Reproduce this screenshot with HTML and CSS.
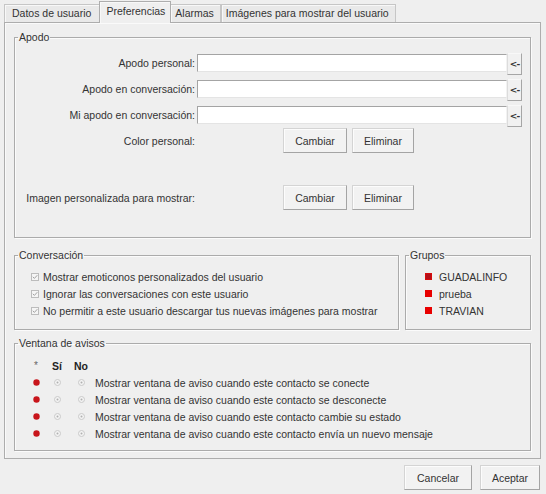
FILE: index.html
```html
<!DOCTYPE html>
<html lang="es">
<head>
<meta charset="utf-8">
<title>Preferencias</title>
<link rel="stylesheet" href="styles.css">
</head>
<body>
<div class="dialog">
  <div class="tabs">
    <div class="tab first">Datos de usuario</div>
    <div class="tab active">Preferencias</div>
    <div class="tab">Alarmas</div>
    <div class="tab">Imágenes para mostrar del usuario</div>
  </div>
  <div class="panel">
    <fieldset class="group apodo">
      <legend>Apodo</legend>
      <div class="nick-row"><span class="lbl">Apodo personal:</span><span class="input"></span><button class="arrow">&lt;-</button></div>
      <div class="nick-row"><span class="lbl">Apodo en conversación:</span><span class="input"></span><button class="arrow">&lt;-</button></div>
      <div class="nick-row"><span class="lbl">Mi apodo en conversación:</span><span class="input"></span><button class="arrow">&lt;-</button></div>
      <div class="btn-row"><span class="lbl">Color personal:</span><div class="btns"><button class="btn w64">Cambiar</button><button class="btn w62">Eliminar</button></div></div>
      <div class="btn-row second"><span class="lbl">Imagen personalizada para mostrar:</span><div class="btns"><button class="btn w64">Cambiar</button><button class="btn w62">Eliminar</button></div></div>
    </fieldset>
    <div class="mid">
      <fieldset class="group conv">
        <legend>Conversación</legend>
        <div class="check"><svg class="cb" width="8" height="8" viewBox="0 0 8 8"><rect x="0.5" y="0.5" width="7" height="7" fill="#f5f5f5" stroke="#bcbcbc"/><path d="M1.8 3.8l1.6 1.6L6.3 2.2" fill="none" stroke="#a2a2a2" stroke-width="1"/></svg><span>Mostrar emoticonos personalizados del usuario</span></div>
        <div class="check"><svg class="cb" width="8" height="8" viewBox="0 0 8 8"><rect x="0.5" y="0.5" width="7" height="7" fill="#f5f5f5" stroke="#bcbcbc"/><path d="M1.8 3.8l1.6 1.6L6.3 2.2" fill="none" stroke="#a2a2a2" stroke-width="1"/></svg><span>Ignorar las conversaciones con este usuario</span></div>
        <div class="check"><svg class="cb" width="8" height="8" viewBox="0 0 8 8"><rect x="0.5" y="0.5" width="7" height="7" fill="#f5f5f5" stroke="#bcbcbc"/><path d="M1.8 3.8l1.6 1.6L6.3 2.2" fill="none" stroke="#a2a2a2" stroke-width="1"/></svg><span>No permitir a este usuario descargar tus nuevas imágenes para mostrar</span></div>
      </fieldset>
      <fieldset class="group grupos">
        <legend>Grupos</legend>
        <div class="grp"><span class="sq checked"></span><span>GUADALINFO</span></div>
        <div class="grp"><span class="sq"></span><span>prueba</span></div>
        <div class="grp"><span class="sq"></span><span>TRAVIAN</span></div>
      </fieldset>
    </div>
    <fieldset class="group avisos">
      <legend>Ventana de avisos</legend>
      <div class="alerts">
        <span class="star">*</span><span class="hd">Sí</span><span class="hd">No</span><span></span>
        <svg class="dot" width="7" height="7" viewBox="0 0 7 7"><circle cx="3.5" cy="3.5" r="3.2" fill="#c8151b"/></svg>
        <svg class="rd" width="7" height="7" viewBox="0 0 7 7"><circle cx="3.5" cy="3.5" r="3" fill="#f4f4f4" stroke="#cacaca"/><circle cx="3.5" cy="3.5" r="1" fill="#b0b0b0"/></svg>
        <svg class="rd" width="7" height="7" viewBox="0 0 7 7"><circle cx="3.5" cy="3.5" r="3" fill="#f4f4f4" stroke="#cacaca"/><circle cx="3.5" cy="3.5" r="1" fill="#b0b0b0"/></svg>
        <span class="txt">Mostrar ventana de aviso cuando este contacto se conecte</span>
        <svg class="dot" width="7" height="7" viewBox="0 0 7 7"><circle cx="3.5" cy="3.5" r="3.2" fill="#c8151b"/></svg>
        <svg class="rd" width="7" height="7" viewBox="0 0 7 7"><circle cx="3.5" cy="3.5" r="3" fill="#f4f4f4" stroke="#cacaca"/><circle cx="3.5" cy="3.5" r="1" fill="#b0b0b0"/></svg>
        <svg class="rd" width="7" height="7" viewBox="0 0 7 7"><circle cx="3.5" cy="3.5" r="3" fill="#f4f4f4" stroke="#cacaca"/><circle cx="3.5" cy="3.5" r="1" fill="#b0b0b0"/></svg>
        <span class="txt">Mostrar ventana de aviso cuando este contacto se desconecte</span>
        <svg class="dot" width="7" height="7" viewBox="0 0 7 7"><circle cx="3.5" cy="3.5" r="3.2" fill="#c8151b"/></svg>
        <svg class="rd" width="7" height="7" viewBox="0 0 7 7"><circle cx="3.5" cy="3.5" r="3" fill="#f4f4f4" stroke="#cacaca"/><circle cx="3.5" cy="3.5" r="1" fill="#b0b0b0"/></svg>
        <svg class="rd" width="7" height="7" viewBox="0 0 7 7"><circle cx="3.5" cy="3.5" r="3" fill="#f4f4f4" stroke="#cacaca"/><circle cx="3.5" cy="3.5" r="1" fill="#b0b0b0"/></svg>
        <span class="txt">Mostrar ventana de aviso cuando este contacto cambie su estado</span>
        <svg class="dot" width="7" height="7" viewBox="0 0 7 7"><circle cx="3.5" cy="3.5" r="3.2" fill="#c8151b"/></svg>
        <svg class="rd" width="7" height="7" viewBox="0 0 7 7"><circle cx="3.5" cy="3.5" r="3" fill="#f4f4f4" stroke="#cacaca"/><circle cx="3.5" cy="3.5" r="1" fill="#b0b0b0"/></svg>
        <svg class="rd" width="7" height="7" viewBox="0 0 7 7"><circle cx="3.5" cy="3.5" r="3" fill="#f4f4f4" stroke="#cacaca"/><circle cx="3.5" cy="3.5" r="1" fill="#b0b0b0"/></svg>
        <span class="txt">Mostrar ventana de aviso cuando este contacto envía un nuevo mensaje</span>
      </div>
    </fieldset>
  </div>
  <div class="footer">
    <button class="btn cancel">Cancelar</button>
    <button class="btn accept">Aceptar</button>
  </div>
</div>
</body>
</html>
```
FILE: styles.css
```css
html, body {
  margin: 0;
  padding: 0;
}
body {
  background: #efefef;
  font-family: "Liberation Sans", Arial, sans-serif;
  font-size: 10.5px;
  color: #333;
  width: 546px;
  height: 494px;
  overflow: hidden;
}
.dialog {
  display: flex;
  flex-direction: column;
}
.tabs {
  display: flex;
  align-items: flex-end;
  height: 22px;
  padding-left: 4px;
  box-sizing: border-box;
}
.tab {
  height: 17px;
  line-height: 16px;
  padding: 0 6px 0 4px;
  border: 1px solid #c6c6c6;
  border-bottom: none;
  background: #e9e9e9;
  white-space: nowrap;
  box-shadow: inset 1px 1px 0 #f8f8f8;
}
.tab.first {
  padding: 0 8px 0 7px;
  border-right: none;
}
.tab.active {
  height: 21px;
  line-height: 19px;
  padding: 0 5px 0 6px;
  background: #efefef;
  border-color: #adadad;
  margin-bottom: -1px;
  position: relative;
  z-index: 1;
}
.tab.active + .tab {
  border-left: none;
}
.panel {
  margin: 0 5px 0 4px;
  height: 437px;
  border: 1px solid #adadad;
  box-shadow: inset 1px 1px 0 #fafafa;
  padding: 8px 9px 0 9px;
  box-sizing: border-box;
  display: flex;
  flex-direction: column;
}
.group {
  margin: 0;
  padding: 0;
  min-width: 0;
  border: 1px solid #ababab;
  box-shadow: 1px 1px 0 #fbfbfb, inset 1px 1px 0 #fbfbfb;
}
.group legend {
  margin-left: 3px;
  padding: 0 1px;
  line-height: 13px;
  color: #333;
}
.apodo {
  padding: 9px 0 27px 0;
}
.nick-row {
  display: flex;
  align-items: flex-start;
  height: 22px;
  margin-bottom: 4px;
}
.lbl {
  width: 180px;
  flex: none;
  text-align: right;
  margin-right: 2px;
  white-space: nowrap;
}
.nick-row .lbl {
  line-height: 20px;
}
.input {
  width: 310px;
  height: 18px;
  margin-top: 1px;
  box-sizing: border-box;
  background: #fff;
  border: 1px solid;
  border-color: #a4a4a4 #f2f2f2 #e4e4e4 #a4a4a4;
}
.arrow {
  width: 15px;
  height: 22px;
  padding: 0 0 1px 0;
  margin: 0;
  font-family: "DejaVu Sans", sans-serif;
  font-size: 9px;
  font-weight: bold;
  letter-spacing: -1px;
  color: #333;
  background: #f1f1f1;
  border: 1px solid;
  border-color: #f8f8f8 #a6a6a6 #a6a6a6 #dcdcdc;
}
.btn-row {
  display: flex;
  align-items: center;
  height: 25px;
  margin-top: -3px;
}
.btn-row.second {
  margin-top: 32px;
}
.btns {
  display: flex;
  gap: 5px;
  margin-left: 86px;
}
.btn {
  height: 25px;
  padding: 0;
  margin: 0;
  font-family: inherit;
  font-size: 10.5px;
  color: #333;
  background: #f2f2f2;
  border: 1px solid;
  border-color: #d4d4d4 #a4a4a4 #a4a4a4 #d4d4d4;
  box-shadow: inset 1px 1px 0 #fcfcfc;
}
.w64 { width: 64px; }
.w62 { width: 62px; }
.mid {
  display: flex;
  gap: 6px;
  margin-top: 11px;
}
.conv {
  width: 385px;
  flex: none;
  box-sizing: border-box;
  padding: 6px 0 10px 0;
}
.grupos {
  flex: 1;
  padding: 6px 0 10px 0;
}
.check, .grp {
  display: flex;
  align-items: center;
  height: 17px;
  white-space: nowrap;
}
.check {
  padding-left: 16px;
}
.grp {
  padding-left: 19px;
}
.cb {
  flex: none;
  margin-right: 4px;
}
.sq {
  width: 7px;
  height: 7px;
  background: #e80000;
  margin-right: 7px;
  flex: none;
}
.sq.checked {
  background: #b3101a;
  box-shadow: inset 0 0 0 1px #d80a0a;
}
.avisos {
  margin-top: 7px;
  padding: 7px 0 8px 0;
}
.alerts {
  display: grid;
  grid-template-columns: 12px 30px 18px 1fr;
  grid-auto-rows: 17px;
  align-items: center;
  justify-items: center;
  padding-left: 15px;
}
.alerts .txt {
  justify-self: start;
  padding-left: 5px;
  white-space: nowrap;
}
.star {
  color: #666;
  font-size: 10px;
}
.hd {
  font-weight: bold;
  color: #222;
}
.footer {
  display: flex;
  justify-content: flex-end;
  gap: 8px;
  padding: 6px 6px 0 0;
}
.cancel { width: 68px; }
.accept { width: 60px; }
```
